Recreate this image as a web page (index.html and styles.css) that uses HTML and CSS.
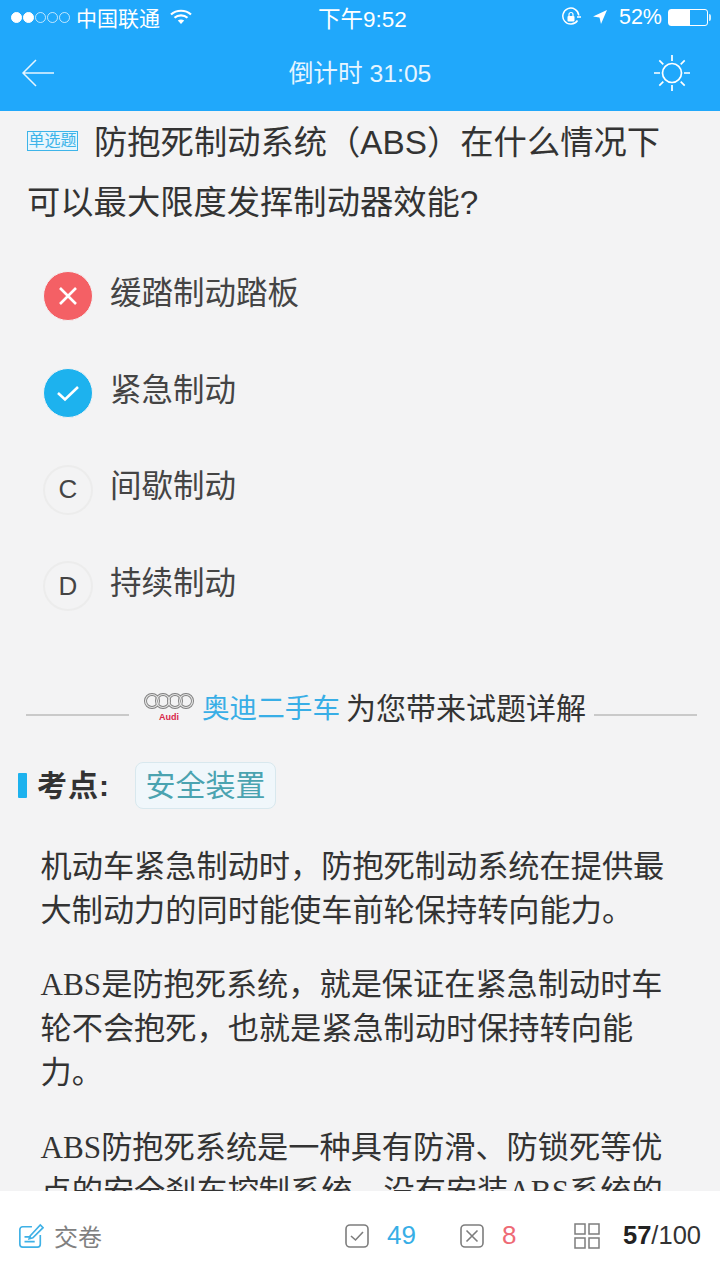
FILE: index.html
```html
<!DOCTYPE html>
<html lang="zh-CN">
<head>
    <meta charset="UTF-8">
    <title>倒计时</title>
    <link rel="stylesheet" href="styles.css">
</head>
<body>
    <div class="page">
        <header class="top">
            <div class="status">
                <div class="status-left">
                    <span class="dot on"></span><span class="dot on"></span><span class="dot"></span><span class="dot"></span><span class="dot"></span>
                    <span class="carrier">中国联通</span>
                    <svg class="wifi" width="22" height="16" viewBox="0 0 22 16">
                        <path d="M1 5.5C6.5 .5 15.500 .5 21 5.500" fill="none" stroke="#fff" stroke-width="2.200"/>
                        <path d="M4.500 8.700C8 5.600 14 5.600 17.500 8.700" fill="none" stroke="#fff" stroke-width="2.200"/>
                        <path d="M7.800 11.600C9.700 10 12.300 10 14.200 11.600L11 15Z" fill="#fff"/>
                    </svg>
                </div>
                <div class="clock">下午9:52</div>
                <div class="status-right">
                    <svg width="20" height="20" viewBox="0 0 20 20">
                        <path d="M16.500 13.500A8 8 0 1 1 17.800 8.500" fill="none" stroke="#fff" stroke-width="1.500"/>
                        <rect x="6.500" y="9" width="7" height="5.500" rx="1" fill="#fff"/>
                        <path d="M8 9V7.500a2 2 0 0 1 4 0V9" fill="none" stroke="#fff" stroke-width="1.200"/>
                        <path d="M16 10h4" stroke="#fff" stroke-width="1.500"/>
                    </svg>
                    <svg class="loc" width="16" height="16" viewBox="0 0 16 16"><path d="M15 1 1 7.500l6.500 1L9 15z" fill="#fff"/></svg>
                    <span class="pct">52%</span>
                    <span class="battery"><span class="battery-fill"></span></span>
                    <span class="battery-tip"></span>
                </div>
            </div>
            <div class="nav">
                <svg width="34" height="30" viewBox="0 0 34 30">
                    <path d="M33 15H2M15 2 2 15l13 13" fill="none" stroke="#e6f5ff" stroke-width="1.500"/>
                </svg>
                <div class="nav-title">倒计时 31:05</div>
                <svg class="nav-sun" width="38" height="38" viewBox="0 0 38 38">
                    <g fill="none" stroke="#fff" stroke-width="1.700">
                        <circle cx="19" cy="19" r="9.500"/>
                        <path d="M19 1v6M19 31v6M1 19h6M31 19h6M6.300 6.300l4 4M27.700 27.700l4 4M6.300 31.700l4-4M27.700 10.300l4-4"/>
                    </g>
                </svg>
            </div>
        </header>

        <main class="content">
            <h1 class="question"><span class="tag">单选题</span>防抱死制动系统（ABS）在什么情况下可以最大限度发挥制动器效能?</h1>

            <ul class="options">
                <li class="option">
                    <span class="mark wrong">
                        <svg width="20" height="20" viewBox="0 0 20 20"><path d="M2 2l16 16M18 2 2 18" stroke="#fff" stroke-width="2.600"/></svg>
                    </span>
                    <span class="option-text">缓踏制动踏板</span>
                </li>
                <li class="option">
                    <span class="mark right">
                        <svg width="24" height="20" viewBox="0 0 24 20"><path d="M2 10l7 6.500L22 4" fill="none" stroke="#fff" stroke-width="2.600"/></svg>
                    </span>
                    <span class="option-text">紧急制动</span>
                </li>
                <li class="option"><span class="mark">C</span><span class="option-text">间歇制动</span></li>
                <li class="option"><span class="mark">D</span><span class="option-text">持续制动</span></li>
            </ul>

            <div class="sponsor">
                <span class="rule"></span>
                <span class="audi">
                    <svg width="50" height="16" viewBox="0 0 50 16">
                        <g fill="none">
                            <g stroke="#7f7f7f" stroke-width="3">
                                <circle cx="8" cy="8" r="6.500"/>
                                <circle cx="19" cy="8" r="6.500"/>
                                <circle cx="31" cy="8" r="6.500"/>
                                <circle cx="42" cy="8" r="6.500"/>
                            </g>
                            <g stroke="#e4e4e4" stroke-width="1.200">
                                <circle cx="8" cy="8" r="6.500"/>
                                <circle cx="19" cy="8" r="6.500"/>
                                <circle cx="31" cy="8" r="6.500"/>
                                <circle cx="42" cy="8" r="6.500"/>
                            </g>
                        </g>
                    </svg>
                    <span class="audi-name">Audi</span>
                </span>
                <span class="brand">奥迪二手车</span>
                <span class="sponsor-text">为您带来试题详解</span>
                <span class="rule"></span>
            </div>

            <div class="point">
                <span class="point-bar"></span>
                <span class="point-label">考点:</span>
                <span class="point-tag">安全装置</span>
            </div>

            <div class="detail">
                <p>机动车紧急制动时，防抱死制动系统在提供最大制动力的同时能使车前轮保持转向能力。</p>
                <p><span class="latin">ABS</span>是防抱死系统，就是保证在紧急制动时车轮不会抱死，也就是紧急制动时保持转向能力。</p>
                <p><span class="latin">ABS</span>防抱死系统是一种具有防滑、防锁死等优点的安全刹车控制系统，没有安装<span class="latin">ABS</span>系统的车辆在紧急制动时容易发生侧滑。</p>
            </div>
        </main>

        <footer class="bar">
            <div class="submit">
                <svg width="26" height="26" viewBox="0 0 28 28">
                    <g fill="none" stroke="#3fb1e6" stroke-width="1.800">
                        <path d="M15 4H5a3 3 0 0 0-3 3v16a3 3 0 0 0 3 3h16a3 3 0 0 0 3-3V13"/>
                        <path d="M7 15h7M7 20h11"/>
                        <path d="M13 14 24 2l3 3-11 11-4 1z"/>
                    </g>
                </svg>
                <span>交卷</span>
            </div>
            <div class="stats">
                <div class="stat right-count">
                    <svg width="24" height="24" viewBox="0 0 24 24"><rect x="1" y="1" width="22" height="22" rx="4" fill="none" stroke="#7d7d7d" stroke-width="1.600"/><path d="M6 12l4.500 4L18 8" fill="none" stroke="#7d7d7d" stroke-width="1.600"/></svg>
                    <span>49</span>
                </div>
                <div class="stat wrong-count">
                    <svg width="24" height="24" viewBox="0 0 24 24"><rect x="1" y="1" width="22" height="22" rx="4" fill="none" stroke="#7d7d7d" stroke-width="1.600"/><path d="M6.500 6.500l11 11M17.500 6.500l-11 11" fill="none" stroke="#7d7d7d" stroke-width="1.600"/></svg>
                    <span>8</span>
                </div>
                <div class="stat progress">
                    <svg width="26" height="26" viewBox="0 0 26 26">
                        <g fill="none" stroke="#7d7d7d" stroke-width="1.500">
                            <rect x="1" y="1" width="10" height="10"/>
                            <rect x="15" y="1" width="10" height="10"/>
                            <rect x="1" y="15" width="10" height="10"/>
                            <rect x="15" y="15" width="10" height="10"/>
                        </g>
                    </svg>
                    <span class="count"><b>57</b>/100</span>
                </div>
            </div>
        </footer>
    </div>
</body>
</html>
```

FILE: styles.css
```css
* {
    box-sizing: border-box;
}

body {
    margin: 0;
    font-family: "Liberation Sans", "Noto Sans CJK SC", sans-serif;
    background-color: #f3f3f4;
    color: #333333;
}

svg {
    display: block;
    flex-shrink: 0;
}

.page {
    display: flex;
    flex-direction: column;
    width: 720px;
    height: 1280px;
    overflow: hidden;
}

.top {
    flex-shrink: 0;
    height: 111px;
    background-color: #20a8fb;
    color: #ffffff;
}

.status {
    display: grid;
    grid-template-columns: 1fr auto 1fr;
    align-items: center;
    height: 34px;
    padding: 0 9px 0 11px;
    font-size: 21px;
}

.status-left, .status-right {
    display: flex;
    align-items: center;
}

.status-right {
    justify-content: flex-end;
}

.clock {
    margin-left: 3px;
    font-size: 22.500px;
}

.dot {
    width: 11px;
    height: 11px;
    margin-right: 1px;
    border: 1px solid #ffffff;
    border-radius: 50%;
    opacity: 0.7;
}

.dot.on {
    background-color: #ffffff;
    opacity: 1;
}

.carrier {
    margin-left: 5px;
}

.wifi {
    margin-left: 10px;
}

.loc {
    margin-left: 11px;
}

.pct {
    margin-left: 11px;
    font-size: 21.500px;
}

.battery {
    width: 40px;
    height: 17px;
    margin-left: 6px;
    border: 1px solid #ffffff;
    border-radius: 3px;
}

.battery-fill {
    display: block;
    width: 21px;
    height: 100%;
    background-color: #ffffff;
}

.battery-tip {
    width: 2px;
    height: 7px;
    margin-left: 1px;
    background-color: #ffffff;
    border-radius: 0 2px 2px 0;
    opacity: 0.8;
}

.nav {
    display: grid;
    grid-template-columns: 1fr auto 1fr;
    align-items: center;
    height: 77px;
    padding: 0 29px 0 21px;
}

.nav-title {
    margin: 0 0 4px 8px;
    font-size: 24.700px;
    color: #e6f5ff;
}

.nav-sun {
    justify-self: end;
}

.content {
    flex: 1;
    min-height: 0;
    overflow: hidden;
}

.question {
    margin: 0;
    padding: 2px 50px 0 27px;
    font-size: 33.300px;
    font-weight: normal;
    line-height: 60px;
    color: #333333;
}

.tag {
    display: inline-block;
    width: 51px;
    height: 20px;
    margin-right: 16px;
    border: 1px solid #3db4e9;
    font-size: 16px;
    line-height: 18px;
    color: #3db4e9;
    text-align: center;
    vertical-align: 8px;
    background-color: #e8f6fd;
}

.options {
    list-style: none;
    margin: 0;
    padding: 15px 0 0 43px;
}

.option {
    display: flex;
    align-items: center;
    gap: 17px;
    height: 96.700px;
    font-size: 31.500px;
    color: #444444;
}

.option-text {
    margin-top: -13px;
}

.mark {
    display: flex;
    align-items: center;
    justify-content: center;
    width: 50px;
    height: 50px;
    border: 2px solid #ececec;
    border-radius: 50%;
    font-size: 26px;
    color: #444444;
}

.mark.wrong {
    background-color: #f46065;
    border-color: #f3f3f4;
    border-width: 1px;
}

.mark.right {
    background-color: #1db2ee;
    border-color: #f3f3f4;
    border-width: 1px;
}

.sponsor {
    display: flex;
    align-items: center;
    height: 36px;
    margin-top: 53px;
    padding: 0 23px 0 26px;
}

.rule {
    flex: 1;
    height: 2px;
    margin-top: 18px;
    background-color: #c9c9c9;
}

.audi {
    display: flex;
    flex-direction: column;
    align-items: center;
    margin: 4px 8px 0 15px;
}

.audi-name {
    margin-top: 3px;
    font-size: 9px;
    font-weight: bold;
    color: #d8264a;
}

.brand {
    font-size: 27.600px;
    color: #38aee6;
}

.sponsor-text {
    margin: 0 8px 0 6px;
    font-size: 30px;
    color: #333333;
}

.point {
    display: flex;
    align-items: center;
    margin-top: 38px;
    padding-left: 18px;
}

.point-bar {
    width: 9px;
    height: 25px;
    margin-right: 10px;
    background-color: #1db2ee;
    border-radius: 1px;
}

.point-label {
    width: 73px;
    margin-top: -4px;
    font-size: 30px;
    font-weight: bold;
    letter-spacing: 1px;
    color: #333333;
}

.point-tag {
    height: 47px;
    margin-left: 25px;
    padding: 0 9.500px;
    border: 1px solid #d8e8ee;
    border-radius: 8px;
    background-color: #f0f7fb;
    font-size: 30px;
    line-height: 45px;
    color: #4aa3b0;
}

.detail {
    padding: 36px 50px 0 40.500px;
    font-size: 31.200px;
    line-height: 44px;
    color: #333333;
}

.detail p {
    margin: 0 0 30.500px;
}

.latin {
    font-family: "Liberation Serif", serif;
}

.bar {
    flex-shrink: 0;
    display: flex;
    align-items: center;
    justify-content: space-between;
    height: 89px;
    padding: 0 19px 0 18px;
    background-color: #ffffff;
}

.submit {
    display: flex;
    align-items: center;
    gap: 10px;
    font-size: 24px;
    color: #808080;
}

.stats {
    display: flex;
    align-items: center;
}

.stat {
    display: flex;
    align-items: center;
    gap: 18px;
    font-size: 26px;
}

.right-count {
    width: 115px;
    color: #38aee6;
}

.wrong-count {
    width: 114px;
    color: #ee6a75;
}

.progress {
    gap: 23px;
}

.count {
    font-size: 25.500px;
    color: #333333;
}

.count b {
    color: #222222;
}
```
